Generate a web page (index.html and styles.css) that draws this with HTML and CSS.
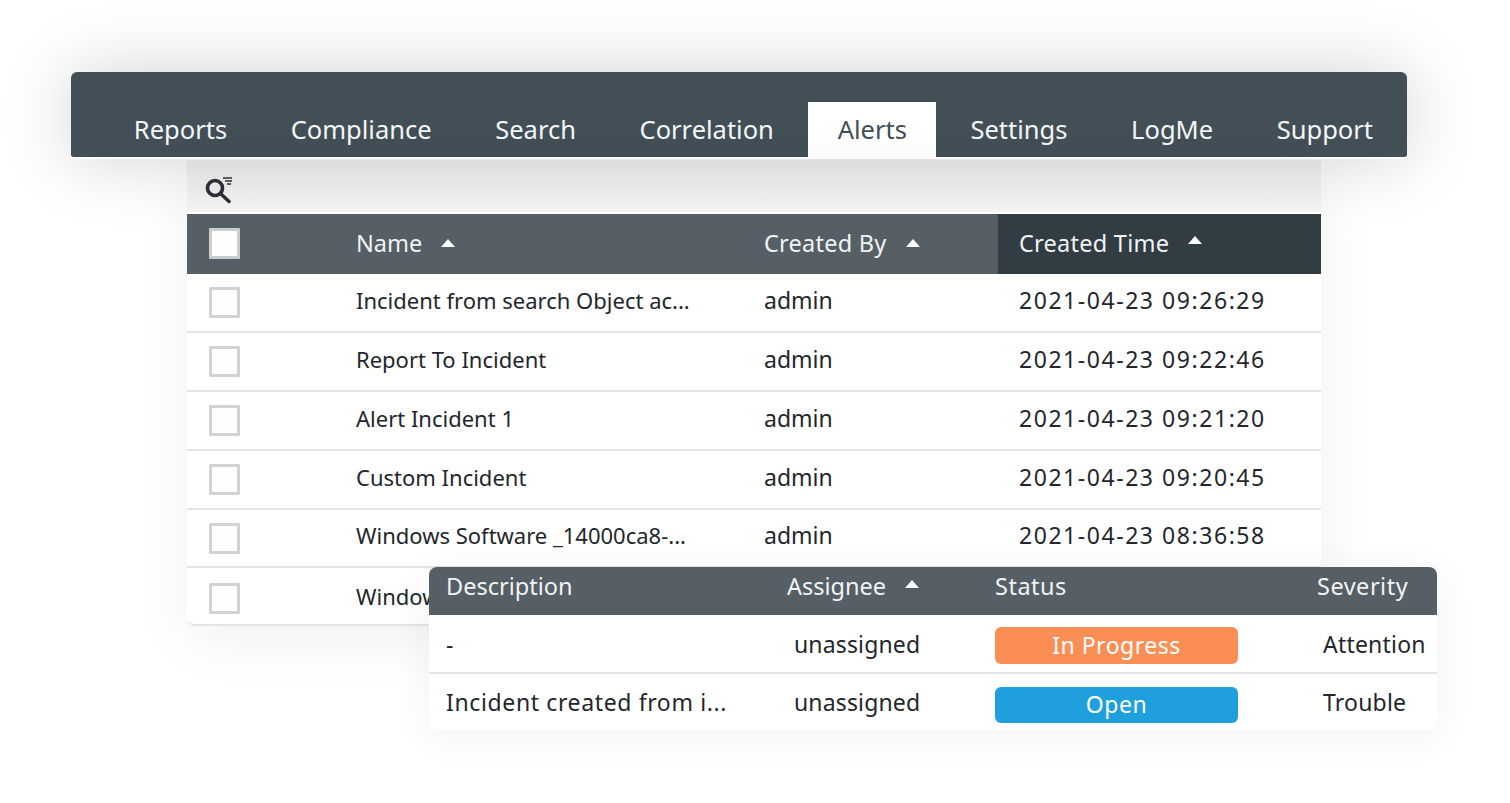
FILE: index.html
```html
<!DOCTYPE html>
<html lang="en">
<head>
<meta charset="utf-8">
<title>Alerts</title>
<link rel="stylesheet" href="styles.css">
</head>
<body>
<div class="stage">
  <nav class="nav">
    <a class="tab">Reports</a>
    <a class="tab">Compliance</a>
    <a class="tab">Search</a>
    <a class="tab">Correlation</a>
    <a class="tab active">Alerts</a>
    <a class="tab">Settings</a>
    <a class="tab">LogMe</a>
    <a class="tab">Support</a>
  </nav>
  <section class="panel">
    <div class="toolbar">
      <svg class="search-icon" width="30" height="32" viewBox="0 0 30 32" fill="none" stroke="#2b2f33">
        <circle cx="11" cy="15" r="7.5" stroke-width="3.6"/>
        <path d="M17 21l8 7.5" stroke-width="3.4" stroke-linecap="round"/>
        <path d="M19 5h9M21 8h7M23 11h4" stroke-width="1.4"/>
      </svg>
    </div>
    <div class="row head">
      <span class="check check-head"></span>
      <span class="cell">Name<i class="sort"></i></span>
      <span class="cell wide">Created By<i class="sort"></i></span>
      <span class="cell sorted wide">Created Time<i class="sort"></i></span>
    </div>
    <div class="row">
      <span class="check"></span><span class="cell">Incident from search Object ac...</span><span class="cell who">admin</span><span class="cell time">2021-04-23 09:26:29</span>
    </div>
    <div class="row">
      <span class="check"></span><span class="cell">Report To Incident</span><span class="cell who">admin</span><span class="cell time">2021-04-23 09:22:46</span>
    </div>
    <div class="row">
      <span class="check"></span><span class="cell">Alert Incident 1</span><span class="cell who">admin</span><span class="cell time">2021-04-23 09:21:20</span>
    </div>
    <div class="row">
      <span class="check"></span><span class="cell">Custom Incident</span><span class="cell who">admin</span><span class="cell time">2021-04-23 09:20:45</span>
    </div>
    <div class="row short">
      <span class="check"></span><span class="cell">Windows Software _14000ca8-...</span><span class="cell who">admin</span><span class="cell time">2021-04-23 08:36:58</span>
    </div>
    <div class="row last">
      <span class="check"></span><span class="cell">Windows</span><span class="cell"></span><span class="cell"></span>
    </div>
  </section>
  <section class="popup">
    <div class="pop-row pop-head">
      <span>Description</span>
      <span>Assignee<i class="sort"></i></span>
      <span class="wider">Status</span>
      <span class="wider">Severity</span>
    </div>
    <div class="pop-row">
      <span>-</span>
      <span class="assignee">unassigned</span>
      <span class="badge orange">In Progress</span>
      <span class="severity">Attention</span>
    </div>
    <div class="pop-row last">
      <span class="desc">Incident created from i...</span>
      <span class="assignee">unassigned</span>
      <span class="badge blue">Open</span>
      <span class="severity">Trouble</span>
    </div>
  </section>
</div>
</body>
</html>
```
FILE: styles.css
```css
* { box-sizing: border-box; }
html, body { margin: 0; height: 100%; background: #fff; overflow: hidden; }
body { font-family: "Noto Sans", "Open Sans", sans-serif; color: #23272b; }

.stage { position: relative; width: 1510px; height: 803px; padding: 72px 0 0 71px; }

.nav {
  position: relative;
  z-index: 1;
  display: flex;
  align-items: flex-end;
  width: 1336px;
  height: 87px;
  padding-left: 31px;
  background: #434f57;
  border-bottom: 2px solid #fff;
  border-radius: 6px 6px 4px 4px;
  box-shadow: 0 0 70px rgba(0,0,0,.18);
}
.tab {
  display: flex;
  align-items: center;
  justify-content: center;
  height: 55px;
  padding: 0 31.8px 2px;
  font-size: 25.5px;
  color: #f4f6f7;
}
.tab.active {
  height: 56px;
  margin: 0 2.8px -1px 2px;
  padding: 0 29px 3px 30px;
  background: #fff;
  color: #434f57;
}

.panel {
  position: relative;
  z-index: 2;
  width: 1134px;
  margin: 1px 0 0 116px;
  background: #fff;
  border-bottom: 2px solid #e4e4e4;
  border-radius: 0 0 8px 8px;
  box-shadow: 0 14px 60px rgba(0,0,0,.06);
}
.toolbar {
  height: 52px;
  padding: 13px 0 0 17px;
  background: linear-gradient(#dcdcdc, #f3f3f3);
}
.search-icon { display: block; }

.row {
  display: grid;
  grid-template-columns: 169px 408px 234px 323px;
  align-items: center;
  height: 59px;
  border-bottom: 2px solid #e4e4e4;
  font-size: 22px;
}
.row .cell { padding-bottom: 6px; white-space: nowrap; }
.row.short { height: 58px; }
.row.last { height: 56px; border-bottom: 0; }
.row.last .check { margin-top: 4px; }
.row.last .cell { padding-bottom: 0; }
.row .check { margin-left: 22px; }
.check {
  display: block;
  width: 31px;
  height: 31px;
  background: #fff;
  border: 3px solid #d0d3d3;
  border-radius: 1px;
}
.row .who { font-size: 23px; }
.row .time { padding-left: 21px; font-size: 23px; letter-spacing: 1.55px; }

.head {
  height: 60px;
  margin-top: 2px;
  background: #555f65;
  border-bottom: 0;
  font-size: 23.5px;
  color: #f1f3f4;
}
.head .check-head { margin-bottom: 2px; border-color: #c9cdce; }
.head .cell { padding-bottom: 2px; }
.head .sorted {
  align-self: stretch;
  display: flex;
  align-items: center;
  padding-left: 21px;
  background: #313c43;
}
.wide { letter-spacing: .25px; }
.wider { letter-spacing: .5px; }
.sort {
  display: inline-block;
  width: 0;
  height: 0;
  margin: 0 0 6px 19px;
  vertical-align: middle;
  border-left: 7.5px solid transparent;
  border-right: 7.5px solid transparent;
  border-bottom: 8px solid #fff;
}

.popup {
  position: absolute;
  left: 429px;
  top: 567px;
  z-index: 3;
  width: 1008px;
  background: #fff;
  border-radius: 8px;
  box-shadow: 0 6px 40px rgba(0,0,0,.06);
  overflow: hidden;
}
.pop-row {
  display: grid;
  grid-template-columns: 341px 208px 322px 137px;
  align-items: center;
  height: 59px;
  padding-left: 17px;
  border-bottom: 2px solid #e4e4e4;
  font-size: 23px;
  white-space: nowrap;
}
.pop-row.last { height: 56px; padding-bottom: 1px; border-bottom: 0; }
.pop-head {
  height: 48px;
  padding-bottom: 11px;
  background: #555f65;
  border-bottom: 0;
  font-size: 23.5px;
  color: #f1f3f4;
}
.pop-head .sort { margin-bottom: 8px; }
.desc { letter-spacing: .63px; }
.assignee { padding-left: 7px; letter-spacing: .15px; }
.severity { padding-left: 6px; letter-spacing: .2px; }
.badge {
  display: flex;
  align-items: center;
  justify-content: center;
  width: 243px;
  padding-bottom: 2px;
  border-radius: 6px;
  letter-spacing: .5px;
  color: #fff;
}
.orange { height: 37px; margin-top: 4px; background: #fa8e55; }
.blue { height: 36px; margin-top: 7px; background: #209fdf; }
```
